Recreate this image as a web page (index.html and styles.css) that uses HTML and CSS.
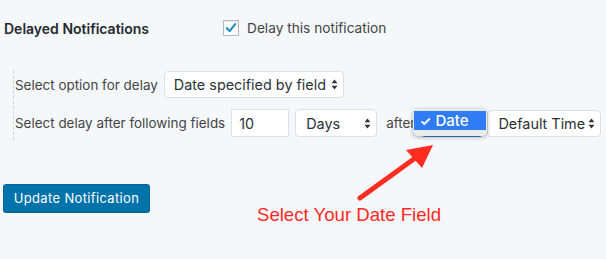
FILE: index.html
```html
<!DOCTYPE html>
<html lang="en">
<head>
<meta charset="utf-8">
<title>Delayed Notifications</title>
<link rel="stylesheet" href="styles.css">
</head>
<body>
<div class="page">
  <div class="head-row">
    <div class="head-title">Delayed Notifications</div>
    <label class="check">
      <span class="box">
        <svg width="16" height="16" viewBox="0 0 16 16"><path d="M3.2 8.2 L6.4 11.6 L12.8 3.6" fill="none" stroke="#1e8cbe" stroke-width="2.4" stroke-linecap="round" stroke-linejoin="round"/></svg>
      </span>
      <span class="check-text">Delay this notification</span>
    </label>
  </div>

  <div class="fieldset">
    <div class="row row-1">
      <span class="label">Select option for delay</span>
      <div class="select sel-option">
        <span>Date specified by field</span>
        <svg class="stepper" width="7" height="11" viewBox="0 0 7 11"><path d="M3.5 0.5 L6.5 4.3 L0.5 4.3 Z M3.5 10.5 L6.5 6.7 L0.5 6.7 Z" fill="#333"/></svg>
      </div>
    </div>
    <div class="row row-2">
      <span class="label">Select delay after following fields</span>
      <div class="input">10</div>
      <div class="select sel-days">
        <span>Days</span>
        <svg class="stepper" width="7" height="11" viewBox="0 0 7 11"><path d="M3.5 0.5 L6.5 4.3 L0.5 4.3 Z M3.5 10.5 L6.5 6.7 L0.5 6.7 Z" fill="#333"/></svg>
      </div>
      <span class="label after">after</span>
      <div class="date-wrap">
        <div class="select sel-date"></div>
        <div class="popup">
          <div class="popup-item"><span class="tick">✓</span>Date</div>
        </div>
      </div>
      <div class="select sel-time">
        <span>Default Time</span>
        <svg class="stepper" width="7" height="11" viewBox="0 0 7 11"><path d="M3.5 0.5 L6.5 4.3 L0.5 4.3 Z M3.5 10.5 L6.5 6.7 L0.5 6.7 Z" fill="#333"/></svg>
      </div>
    </div>
  </div>

  <div class="actions">
    <button class="btn" type="button">Update Notification</button>
  </div>

  <svg class="arrow" width="606" height="259" viewBox="0 0 606 259">
    <line x1="360" y1="198" x2="418" y2="156" stroke="#ff2d20" stroke-width="5" stroke-linecap="round"/>
    <path d="M433 145 L406 150 L422 168 Z" fill="#ff2d20"/>
  </svg>
  <div class="callout">Select Your Date Field</div>
</div>
</body>
</html>
```

FILE: styles.css
```css
html, body {
  margin: 0;
  padding: 0;
}
body {
  background: #f4f8fb;
  font-family: Inter, "Noto Sans", "Liberation Sans", sans-serif;
  color: #32373c;
  width: 606px;
  height: 259px;
  overflow: hidden;
}
.page {
  position: relative;
  width: 606px;
  height: 259px;
}
.head-row {
  display: flex;
  align-items: center;
  padding: 19px 0 0 4px;
  height: 18px;
}
.head-title {
  width: 219px;
  font-size: 14px;
  font-weight: 600;
  color: #23282d;
}
.check {
  display: flex;
  align-items: center;
  gap: 8px;
}
.box {
  width: 14px;
  height: 14px;
  border: 1px solid #b4b9be;
  background: #fff;
  box-shadow: inset 0 1px 2px rgba(0,0,0,0.1);
  display: flex;
  align-items: center;
  justify-content: center;
}
.box svg {
  display: block;
}
.check-text {
  font-size: 13.7px;
  color: #444;
}
.fieldset {
  margin: 33px 0 0 13px;
  border-left: 1px dashed #ccd0d4;
  padding: 1px 0 3px 1px;
  display: flex;
  flex-direction: column;
  gap: 11px;
}
.row {
  display: flex;
  align-items: center;
}
.row-1 {
  height: 27px;
  gap: 6px;
}
.row-2 {
  height: 28px;
}
.label {
  font-size: 13.45px;
  color: #444;
}
.select {
  box-sizing: border-box;
  height: 27px;
  background: #fff;
  border: 1px solid #dcdfe3;
  border-radius: 4px;
  display: flex;
  align-items: center;
  justify-content: space-between;
  padding: 0 5px 0 9px;
  font-size: 14.4px;
  color: #2c3338;
}
.stepper {
  display: block;
  flex: none;
}
.sel-option {
  width: 180px;
}
.input {
  box-sizing: border-box;
  width: 58px;
  height: 28px;
  margin-left: 6px;
  background: #fff;
  border: 1px solid #dcdfe3;
  font-size: 14.4px;
  color: #2c3338;
  display: flex;
  align-items: center;
  padding-left: 7px;
}
.sel-days {
  width: 82px;
  height: 28px;
  margin-left: 6px;
  padding-left: 10px;
}
.after {
  margin-left: 9px;
}
.date-wrap {
  position: relative;
  margin-left: 6px;
  width: 62px;
  height: 28px;
}
.sel-date {
  width: 62px;
  height: 28px;
  border-bottom: 2px solid #3b7fd0;
}
.popup {
  position: absolute;
  left: -8px;
  top: 0;
  width: 74px;
  height: 27px;
  box-sizing: border-box;
  background: #e9ebee;
  border-radius: 5px;
  box-shadow: 0 1px 4px rgba(0,0,0,0.35);
  padding: 2px 1px 0;
}
.popup-item {
  height: 19px;
  background: #2f7cf6;
  color: #fff;
  font-size: 15px;
  font-weight: 500;
  display: flex;
  align-items: center;
  padding-left: 5px;
}
.tick {
  font-size: 13px;
  font-weight: 700;
  width: 16px;
}
.sel-time {
  width: 114px;
  height: 27px;
  margin-left: 4px;
  padding-left: 10px;
}
.actions {
  padding: 44px 0 0 3px;
}
.btn {
  box-sizing: border-box;
  width: 147px;
  height: 28px;
  background: #0073aa;
  border: 1px solid #006799;
  border-radius: 3px;
  color: #fff;
  font-family: Inter, "Noto Sans", "Liberation Sans", sans-serif;
  font-size: 13px;
  letter-spacing: 0.35px;
  padding: 0;
  box-shadow: 0 1px 0 #006799;
}
.arrow {
  position: absolute;
  left: 0;
  top: 0;
  pointer-events: none;
}
.callout {
  position: absolute;
  left: 257px;
  top: 204px;
  font-family: "Liberation Sans", Arial, sans-serif;
  font-size: 18.6px;
  color: #ff2a1f;
}
```
